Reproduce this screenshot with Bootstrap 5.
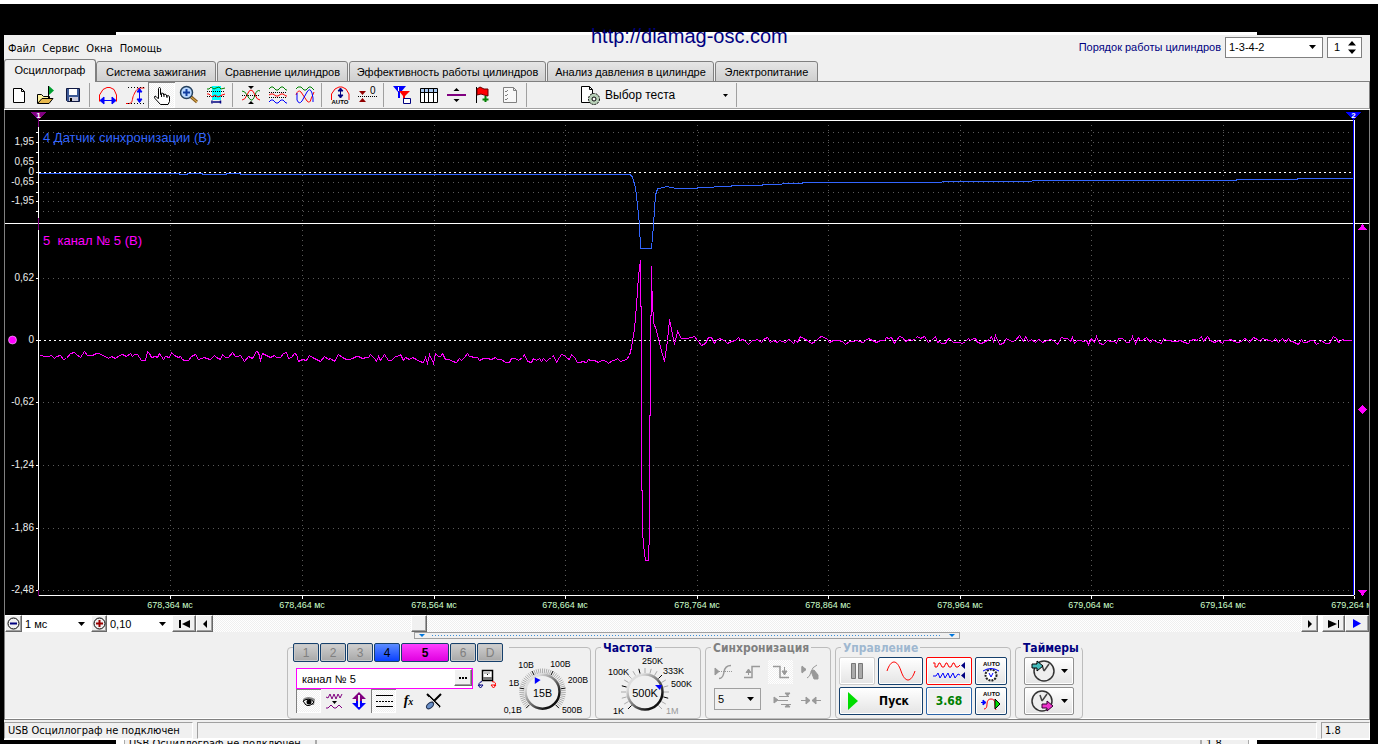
<!DOCTYPE html>
<html lang="ru">
<head>
<meta charset="utf-8">
<meta name="viewport" content="width=device-width, initial-scale=1">
<title>Осциллограф</title>
<link href="https://cdn.jsdelivr.net/npm/bootstrap@5.3.0/dist/css/bootstrap.min.css" rel="stylesheet">
<style>
:root{--face:#f0f0f0;--line:#808080;--navy:#000080;--mag:#f0f;--ui:"Liberation Sans",Arial,sans-serif;--tah:"DejaVu Sans Condensed","Liberation Sans",sans-serif}
body{background:#fff;color:#000;font:11px/14px var(--ui)}
button,input,select{font:inherit;color:inherit;border-radius:0;margin:0}
button{padding:0;border:0;background:none}
svg{display:block}
.desk{background:#000;margin:4px 4px 0 0;min-height:calc(100vh - 4px);padding-top:28px;overflow:hidden}
.backwin{margin:0 121px 0 116px;background:#fff;height:3px}
.backwin.foot{height:4px;overflow:hidden;font-family:var(--tah)}
.backwin.foot span{background:var(--face);border:1px solid #aaa;border-width:0 1px;height:4px;padding-left:4px;line-height:8px}
.site{top:26px;left:50%;margin-left:-100px;font-size:20px;line-height:20px;color:var(--navy);text-decoration:none;z-index:3}
.app{margin:0 8px 0 4px;background:var(--face)}
.menubar{height:24px;font-family:var(--tah)}
.menubar a{color:#000;text-decoration:none;margin-right:7px}
.order{color:var(--navy);font-family:var(--ui)}
.drop{appearance:none;border:1px solid var(--line);padding:0 3px;background:#fff url("data:image/svg+xml,%3Csvg xmlns='http://www.w3.org/2000/svg' width='7' height='4'%3E%3Cpath d='M0 0h7L3.5 4z'/%3E%3C/svg%3E") no-repeat right 6px center}
.spin{border:1px solid var(--line);background:#fff;width:35px;height:21px}
.spin input{appearance:textfield;width:20px;border:0;padding:0 0 0 6px;background:none}
.spin input::-webkit-inner-spin-button{display:none}
.tabstrip{height:23px;box-shadow:inset 0 -1px var(--line)}
.tabstrip button{height:21px;width:120px;margin-right:1px;border:1px solid var(--line);border-radius:3px 3px 0 0;background:linear-gradient(#e6e6e6,#cfcfcf);white-space:nowrap}
.tabstrip button.active{height:23px;width:92px;margin:0;background:var(--face);border-bottom:0;padding-bottom:2px}
.tabstrip button:nth-child(3){width:131px}
.tabstrip button:nth-child(4){width:197px}
.tabstrip button:nth-child(5){width:167px}
.tabstrip button:nth-child(6){width:103px}
.tools{height:27px;border:solid var(--line);border-width:0 1px 1px;border-bottom-color:#a0a0a0;box-shadow:0 1px #fff;margin-bottom:1px}
.tools .tb{width:27px;height:26px;display:grid;place-items:center}
.down{background:repeating-conic-gradient(#fff 0 25%,#f0f0f0 0 50%) 0 0/2px 2px;box-shadow:inset 1px 1px var(--line),inset -1px -1px #fff}
.vr1{width:1px;height:24px;background:#a0a0a0;margin:0 4px 0 3px}
.testsel{font-size:12px;width:149px}
.scope{background:#000;border:solid var(--line);border-width:0 1px}
.scope svg{width:100%;height:auto;font-family:var(--ui)}
.navrow{height:17px;border:solid var(--line);border-width:0 1px;background:#fff}
.rb{height:17px;background:var(--face);border:1px solid;border-color:#fff #696969 #696969 #fff;box-shadow:inset -1px -1px #a0a0a0;display:grid;place-items:center;flex:none}
.navrow .drop{border:0;height:17px}
.scroll{appearance:none;height:17px;background:repeating-conic-gradient(#fff 0 25%,#efefef 0 50%) 0 0/2px 2px}
.scroll::-webkit-slider-thumb{appearance:none;width:16px;height:17px;background:var(--face);border:1px solid;border-color:#fff #696969 #696969 #fff;box-shadow:inset -1px -1px #a0a0a0}
.panel{border:solid var(--line);border-width:0 1px 1px;height:88px;box-shadow:inset 0 -1px #fff}
.grip{width:546px;height:7px;border:1px solid #a0a0a0;margin:0 auto}
.grip i{flex:1;margin:2px 7px;height:1px;background:repeating-linear-gradient(90deg,#3b8fd8 0 1px,transparent 0 3px)}
.group{border:1px solid #bcbcbc;border-radius:4px;height:72px;position:relative;margin-right:4px}
.group legend{position:absolute;top:-7px;left:5px;width:auto;float:none;margin:0;padding:0 2px;background:var(--face);font:bold 12px/14px "DejaVu Sans Condensed",sans-serif;color:var(--navy)}
.chs{position:absolute;top:-5px;left:5px;background:var(--face);padding-right:6px;gap:1px}
.chs button{width:26px;height:19px;border:1px solid #16406c;border-radius:2px;background:linear-gradient(#d0d0d0,#a8a8a8);color:#808080;font-size:12px;line-height:16px;box-shadow:inset 0 0 0 1px #c8c8c8}
.chs .c4{background:linear-gradient(#5c8cff,#0a40ff);box-shadow:none;color:#000}
.chs .c5{background:linear-gradient(#ff40ff,#e000e0);box-shadow:none;width:48px;color:#000;font-weight:bold}
.chname{width:177px;height:21px;border:1px solid var(--mag);background:#fff}
.chname input{border:0;width:150px;padding:0 5px;background:none}
.mini{width:25px;height:24px;display:grid;place-items:center}
.cbtn{border:1px solid #16406c;border-radius:2px;background:linear-gradient(#fff,#e4e4e4);display:grid;place-items:center;box-shadow:inset 0 0 0 1px #fff}
.ctl{display:grid;grid-template-columns:36px 45px 46px 32px;grid-auto-rows:28px;gap:2px 3px;padding:9px 3px}
.timer{width:50px;height:28px;border-color:#909090;display:flex;align-items:center;justify-content:center;gap:5px}
.status{height:20px;padding-top:2px;border-bottom:1px solid #fff;font-family:var(--tah)}
.status div{border:1px solid;border-color:#a0a0a0 #fff #fff #a0a0a0;padding:1px 0 0 3px;height:17px}
</style>
</head>
<body>
<a class="site position-absolute" href="http://diamag-osc.com">http://diamag-osc.com</a>
<div class="desk d-flex flex-column">
<div class="backwin"></div>
<main class="app d-flex flex-column">
<header class="menubar d-flex align-items-center">
<nav class="d-flex ps-1 pt-1"><a href="#">Файл</a><a href="#">Сервис</a><a href="#">Окна</a><a href="#">Помощь</a></nav>
<div class="order ms-auto d-flex align-items-center me-2">
<label for="ord">Порядок работы цилиндров</label>
<select id="ord" class="drop text-black ms-1" style="width:98px;height:21px"><option>1-3-4-2</option></select>
<div class="spin d-flex align-items-center text-black ms-1"><input type="number" value="1" aria-label="Цилиндр">
<svg width="8" height="13"><path d="M0 4.500L4 0l4 4.500zM0 8.500h8L4 13z"/></svg></div>
</div>
</header>
<div class="tabstrip d-flex align-items-end" role="tablist">
<button class="active" role="tab">Осциллограф</button><button role="tab">Система зажигания</button><button role="tab">Сравнение цилиндров</button><button role="tab">Эффективность работы цилиндров</button><button role="tab">Анализ давления в цилиндре</button><button role="tab">Электропитание</button>
</div>
<div class="tools d-flex align-items-center" role="toolbar">
<button class="tb" aria-label="Новый"><svg width="20" height="20" fill="#fff" stroke="#000"><path d="M4.500 3.500h8l3 3v11h-11zM12.500 3.500v3h3"/></svg></button>
<button class="tb" aria-label="Открыть"><svg width="20" height="20"><path d="M1.500 18V9.500h4l2 2h6v2" fill="#fff3a0" stroke="#000"/><path d="M1.500 18.500L6 13.500h11l-4 5z" fill="#e8b84c" stroke="#000"/><path d="M12.500 1v13" stroke="#000"/><path d="M13 1l5 4.500-5 4.500z" fill="#00a030"/></svg></button>
<button class="tb" aria-label="Сохранить"><svg width="20" height="20"><path d="M3.500 3.500h13v13h-12l-1-1z" fill="#3d5a96" stroke="#101840"/><path d="M6 4h8v6H6z" fill="#fff"/><path d="M6 12h9v4H6z" fill="#ccd"/><path d="M7 13h2v3H7z" fill="#000"/></svg></button>
<span class="vr1"></span>
<button class="tb" aria-label="Ширина"><svg width="20" height="20" fill="none"><path d="M1.500 16.500V10L5 4.500l4-2h3l4 2L18.500 10v6.500" stroke="red"/><path d="M3 15.500h14M6 12l-4 3.500L6 19zM14 12l4 3.500-4 3.500z" stroke="#00f" fill="#00f"/></svg></button>
<button class="tb" aria-label="Высота"><svg width="20" height="20" fill="none"><path d="M1 18.500h3c4 0 3-5 4.500-8s3-7.500 7-7.500h4" stroke="red"/><path d="M3 2.500h16M3 18.500h16" stroke="#000" stroke-dasharray="1 2"/><path d="M14.500 5v11M12 7l2.500-3.500L17 7zM12 14l2.500 3.500L17 14z" stroke="#00f" fill="#00f"/></svg></button>
<button class="tb down" aria-label="Рука"><svg width="20" height="20" fill="#fff" stroke="#000"><path d="M6.500 13.500V3.500Q7.500 1 8.500 3.500v6l1-1.500 2 .5V10l1.500-1 1.500 1v1.500L16 10.500l1.500 1v5l-1.500 3H8.500L3 13.500q-1-1.500 0-2.500 1 0 3.500 3M9.500 9v3M12 10v2M15 11v2"/></svg></button>
<button class="tb" aria-label="Лупа"><svg width="20" height="20"><path d="M11 11l7 6" stroke="#8a5a20" stroke-width="3"/><path d="M12 12l6 5" stroke="#e8c050"/><circle cx="7.500" cy="7.500" r="6" fill="#b8d8ff" stroke="#24405c" stroke-width="1.500"/><path d="M7.500 4v7M4 7.500h7" stroke="#123ea0" stroke-width="2"/></svg></button>
<button class="tb" aria-label="Окно"><svg width="20" height="20" fill="none"><path d="M6 1h9v14H6z" fill="#0ff"/><path d="M1 4h2l2-2 3 2 2-1 3-1 2 2 4-1" stroke="green"/><path d="M1 6.500h18M1 11.500h18" stroke="#000" stroke-dasharray="1 1"/><path d="M1 9h2l3 3 3-2 3 2 4-2 3-1" stroke="red"/><path d="M6 15.500v3M14.500 15.500v3M7 17h7" stroke="#000080" stroke-width="1.500"/></svg></button>
<span class="vr1"></span>
<button class="tb" aria-label="Центр"><svg width="20" height="20" fill="none"><path d="M1 6q3 0 5 4t4 5 4-5 5-4" stroke="green"/><path d="M1 15q3 0 5-5t4-5 4 5 5 5" stroke="red"/><path d="M1 10.500h18" stroke="#000" stroke-dasharray="1 1"/><path d="M7 1h6l-3 3zM7 19h6l-3-3z" fill="#000"/></svg></button>
<button class="tb" aria-label="Разделить"><svg width="20" height="20" fill="none"><path d="M1 4l2-2h2l3 3h2l3-3h2l3 3h1" stroke="green"/><path d="M1 7.500h18M1 12.500h18" stroke="#000" stroke-dasharray="1 1"/><path d="M1 10l2-1h2l3 2h2l3-2h2l3 2h1" stroke="red"/><path d="M1 17l2-2h2l3 3h2l3-3h2l3 3h1" stroke="#00f"/></svg></button>
<button class="tb" aria-label="Наложить"><svg width="20" height="20" fill="none"><path d="M1 4l2-2h3l3 3h2l3-3h2l3 3" stroke="green"/><path d="M1 10q2-6 5-3l6 9q3 3 4-2l3-7" stroke="red"/><path d="M2 8v7q2 5 5 1l5-9q3-5 5 1l1 5v4" stroke="#00f"/></svg></button>
<span class="vr1"></span>
<button class="tb" aria-label="Авто"><svg width="20" height="20" fill="none"><path d="M1.500 15V9L5 4l4-2h3l4 2 3 5v6" stroke="red"/><path d="M10.500 4v8M8 6l2.500-3L13 6zM8 10l2.500 3L13 10z" stroke="#000080" fill="#000080"/><text x="1.500" y="19" font-size="6" font-weight="bold" fill="#000">AUTO</text></svg></button>
<button class="tb" aria-label="Ноль"><svg width="20" height="20"><path d="M2 6h7l-3.500 4zM2 17h7l-3.500-4z" fill="#900000"/><path d="M1 11.500h19" stroke="#000" stroke-dasharray="1 1"/><text x="13" y="9" font-size="10">0</text></svg></button>
<span class="vr1"></span>
<button class="tb" aria-label="Маркеры"><svg width="20" height="20"><path d="M1 1h13L9 7H8v6H6V7z" fill="#00f"/><path d="M7 6h11l-5 5v5h-2v-5z" fill="red"/><path d="M6.500 2v4" stroke="#fff"/><path d="M11.500 13.500h7v5h-7z" fill="#fff" stroke="#000080"/></svg></button>
<button class="tb" aria-label="Таблица"><svg width="20" height="20"><path d="M1.500 3.500h17v14h-17z" fill="#fff" stroke="#000"/><path d="M2 4h16v3H2z" fill="#a8c8f0"/><path d="M1 7.500h18M5.500 4v14M9.500 4v14M14.500 4v14" stroke="#000"/></svg></button>
<button class="tb" aria-label="Линия"><svg width="20" height="20"><path d="M1 9h19v2H1z" fill="purple"/><path d="M7.500 6h6l-3-3zM7.500 14h6l-3 3z"/></svg></button>
<button class="tb" aria-label="Флаг"><svg width="20" height="20"><path d="M3.500 2v16" stroke="#000"/><path d="M4 4l3-2 4 2h4v7l-4-1-3-1-4 1z" fill="red" stroke="#600"/><path d="M12.500 11v6M9.500 14.500h6" stroke="green" stroke-width="2"/></svg></button>
<button class="tb" aria-label="Отчёт"><svg width="20" height="20" fill="#f8f8f8" stroke="#808080"><path d="M3.500 2.500h10l3 3v12h-13zM13.500 2.500v3h3M5 6l1 1 2-2M5 10l1 1 2-2M5 14l1 1 2-2"/></svg></button>
<span class="vr1"></span>
<button class="testsel d-flex align-items-center ms-5"><svg width="22" height="22"><path d="M2.500 2.500h8l3 3v13h-11zM10.500 2.500v3h3" fill="#fff" stroke="#000"/><circle cx="15" cy="15" r="5.500" fill="#b8d0b8" stroke="#000" stroke-dasharray="2 1"/><circle cx="15" cy="15" r="2" fill="#fff" stroke="#000"/></svg><span class="ps-1">Выбор теста</span><svg class="ms-auto" width="5" height="3"><path d="M0 0h5L2.500 3z"/></svg></button><span class="vr1 ms-2"></span>
</div>
<div class="scope">
<svg id="plot" viewBox="5 110 1364 505" shape-rendering="crispEdges">
<g id="grid" stroke="#5a5a5a" stroke-dasharray="1 4"></g>
<g stroke="#fff" fill="none">
<path d="M39 172.500H1354M39 340.500H1354" stroke-dasharray="2 3"/>
<path d="M38.500 120.500H1354.500M38.500 120.500V595.500H1354M5 223.500H1369M1354.500 120V595"/>
<path d="M36 132.500h3m-3 10h3m-3 10h3m-3 10h3m-3 10h3m-3 10h3m-3 10h3m-3 9h3m-3 10h3M36 278.500h3m-3 62h3m-3 62h3m-3 63h3m-3 63h3m-3 62h3"/>
</g>
<path d="M38.500 115v12M38.500 218v12M38.500 590v6" stroke="purple"/>
<path d="M1353.500 115V595" stroke="#00f"/>
<path d="M31 112h15l-7.500 8z" fill="purple"/><path d="M1346 112h15l-7.500 8z" fill="#00f"/>
<g fill="#fff" font-size="8" font-weight="bold" text-anchor="middle"><text x="38.500" y="118">1</text><text x="1353.500" y="118">2</text></g>
<g id="vlab" fill="#eee" font-size="10" text-anchor="end"></g>
<g id="tlab" fill="#cfc" font-size="9" text-anchor="middle"></g>
<text x="43" y="142" font-size="13" fill="#36f">4 Датчик синхронизации (В)</text>
<text x="43" y="245" font-size="13" fill="#f0f" xml:space="preserve">5  канал № 5 (В)</text>
<path fill="none" stroke="#36f" d="M39 173.500H179V174.500H187V173.500H202V174.500H226V173.500H240V174.500H630L632.500 177L635.500 188L637.500 205L639.500 225L640.500 248.500H651.500L653.500 225L655.500 195L657.500 189L667 186.500L676 188.500H697V187.500L731 186.500V185.500H762V184.500L802 183.500V182.500H900L985 181.500L1080 180.500H1236V179.500H1297V178.500H1353"/>
<path id="wave" fill="none" stroke="#f0f" transform="translate(.5 .5)"/>
<circle cx="12.500" cy="340" r="4" fill="#f0f" stroke="#fcf" stroke-width=".6" shape-rendering="auto"/>
<path d="M1358 230h9l-4.500-6zM1358 590h9l-4.500 6zM1358 409.500l4.500-4.500 4.500 4.500-4.500 4.500z" fill="#f0f"/>
</svg>
</div>
<div class="navrow d-flex">
<button class="rb" style="width:17px" aria-label="Меньше"><svg width="13" height="13"><circle cx="6.500" cy="6.500" r="5.500" fill="none" stroke="#000"/><path d="M3 6.500h7" stroke="#000080" stroke-width="2"/></svg></button>
<select class="drop" style="width:69px" aria-label="Развёртка"><option>1 мс</option></select>
<button class="rb" style="width:16px" aria-label="Больше"><svg width="13" height="13"><circle cx="6.500" cy="6.500" r="5.500" fill="none" stroke="#000"/><path d="M3 6.500h7M6.500 3v7" stroke="#900" stroke-width="2"/></svg></button>
<select class="drop" style="width:65px" aria-label="Масштаб"><option>0,10</option></select>
<button class="rb" style="width:24px" aria-label="В начало"><svg width="11" height="8"><path d="M0 0h2v8H0zM11 0v8L3 4z"/></svg></button>
<button class="rb" style="width:17px" aria-label="Назад"><svg width="4" height="8"><path d="M4 0v8L0 4z"/></svg></button>
<input class="scroll flex-grow-1" type="range" min="0" max="1000" value="185" aria-label="Прокрутка">
<button class="rb" style="width:17px" aria-label="Вперёд"><svg width="4" height="8"><path d="M0 0v8l4-4z"/></svg></button>
<button class="rb ms-1" style="width:23px" aria-label="В конец"><svg width="11" height="8"><path d="M10 0h1v8h-1zM0 0v8l9-4z"/></svg></button>
<button class="rb" style="width:24px" aria-label="Пуск просмотра"><svg width="8" height="9"><path d="M0 0v9l8-4.500z" fill="#00f"/></svg></button>
</div>
<div class="panel">
<div class="grip d-flex align-items-center px-1"><svg width="6" height="4"><path d="M0 0h6L3 3z" fill="#07d"/></svg><i></i><svg width="6" height="4"><path d="M0 0h6L3 3z" fill="#07d"/></svg></div>
<div class="d-flex justify-content-center pt-2 pe-1">
<fieldset class="group d-flex" style="width:304px">
<div class="chs d-flex"><button>1</button><button>2</button><button>3</button><button class="c4">4</button><button class="c5">5</button><button>6</button><button>D</button></div>
<div class="ps-2 pt-3">
<div class="d-flex align-items-center mt-1">
<div class="chname d-flex"><input value="канал № 5" aria-label="Имя канала"><button class="rb ms-auto mt-px" style="width:18px" aria-label="Выбрать"><svg width="8" height="2"><path d="M0 0h2v2H0zM3 0h2v2H3zM6 0h2v2H6z"/></svg></button></div>
<svg class="ms-1" width="20" height="20" fill="none"><path d="M5.500 1.500h10v10h-10z" fill="#fff" stroke="#000" stroke-width="1.500"/><path d="M6 8h9v3H6z" fill="#777"/><path d="M7.500 4h6M10.500 5v2" stroke="#000" stroke-dasharray="1 1"/><path d="M5 12.500Q0 14 3.500 17M1 16h5l-2.500 3z" stroke="#000080" fill="#000080" fill-opacity="0"/><path d="M15 12.500q6 1 2 4.500M19 16h-5l2.500 3z" stroke="red"/></svg>
</div>
<div class="d-flex">
<button class="mini down" aria-label="Видимость"><svg width="18" height="16"><path d="M3 6q5-4 12 0l-1 6H5z" fill="#888"/><path d="M3 8q6-4 11 1-4 5-8 3z" stroke="#000" fill="#eee"/><circle cx="9" cy="9" r="2.500"/></svg></button>
<button class="mini" aria-label="Фильтр"><svg width="18" height="18" fill="none" stroke="purple"><path d="M1 5l2 1 2-4 2 5 2-5 2 5 2-5 2 4 2-4M1 16h2l3-3 3 3h2l3-3 3 3"/><path d="M7 9h5l-2.500 3z" fill="#000" stroke="none"/></svg></button>
<button class="mini" aria-label="Сдвиг"><svg width="16" height="20"><path d="M8 1l7 7h-4v3H9V4H7v7H5V8H1z" fill="purple"/><path d="M8 19l7-7h-4v-2H9v6H7v-6H5v2H1z" fill="#00f"/></svg></button>
<button class="mini down" aria-label="Линии"><svg width="18" height="16" stroke="#000"><path d="M1 2.500h17M1 13.500h17"/><path d="M1 8.500h17" stroke-dasharray="2 1"/></svg></button>
<button class="mini" aria-label="Формула"><i style="font:italic bold 14px/14px 'Liberation Serif',serif">f<small style="font-size:10px">x</small></i></button>
<button class="mini" aria-label="Настройки"><svg width="18" height="18"><path d="M2 2l13 13M16 2L8 10" stroke="#000" stroke-width="2"/><path d="M4 5l10 10" stroke="#ddd"/><ellipse cx="5" cy="13.500" rx="4" ry="2.500" transform="rotate(-40 5 13.500)" fill="#6a90c8" stroke="#235"/></svg></button>
</div>
</div>
<svg class="dial ms-auto" width="96" height="70" viewBox="494 648 96 70" data-c="541 692"></svg>
</fieldset>
<fieldset class="group" style="width:106px"><legend>Частота</legend>
<svg class="dial" width="100" height="70" viewBox="596 648 100 70" data-c="645 692"></svg>
</fieldset>
<fieldset class="group ps-1" style="width:126px"><legend style="color:#808080">Синхронизация</legend>
<div class="d-flex pt-2 mt-1"><button class="mini" aria-label="Триггер"><svg width="18" height="16" fill="none" stroke="#999"><path d="M1 4v7l4-3.500z" fill="#999"/><path d="M1 7.500h17" stroke-dasharray="1 1"/><path d="M5 14.500q4 0 5-6.500t7-6.500" stroke-width="1.500"/></svg></button><button class="mini ms-1" aria-label="Фронт"><svg width="18" height="16" fill="none" stroke="#999"><path d="M1 13.500h8v-11h8" stroke-width="1.500"/><path d="M5.500 6v5M3 8.500h5L5.500 5z" fill="#999"/></svg></button><button class="mini down shadow-none ms-1" aria-label="Спад"><svg width="18" height="16" fill="none" stroke="#999"><path d="M1 2.500h7v11h9" stroke-width="1.500"/><path d="M12.500 3v7M10 7h5l-2.500 4z" fill="#999"/></svg></button><button class="mini ms-1" aria-label="Режим"><svg width="18" height="18" fill="#999" stroke="#999"><path d="M1 3v7l4-3.500zM6 15q3-1 4-6t6-7" fill-opacity="0"/><path d="M1 4v5l4-2.500zM10 8l3-1 4 5v4h-4z"/></svg></button></div>
<div class="d-flex mt-1"><select class="drop ms-1" style="width:47px;height:22px;background-color:#f0f0f0;border-color:#a0a0a0" aria-label="Канал"><option>5</option></select><button class="mini ms-2 me-1" aria-label="Уровень"><svg width="18" height="16" fill="#999" stroke="#999"><path d="M1 5v6l4-3zM12 1h5l-2.500 3zM12 15h5l-2.500-3z"/><path d="M5 8.500h10M6 4.500h10M8 12.500h10"/></svg></button><button class="mini" aria-label="Сжать"><svg width="20" height="10" fill="#999" stroke="#999"><path d="M0 5.500h9M5 2v7l4-3.500zM20 5.500h-9M15 2v7l-4-3.500z"/></svg></button></div>
</fieldset>
<fieldset class="group" style="width:176px"><legend style="color:#9fb8d0">Управление</legend>
<div class="ctl">
<button class="cbtn" style="border-color:#ccc" aria-label="Пауза"><svg width="12" height="17" fill="#aaa" stroke="#777"><path d="M.500.500h4v15h-4zM7.500.500h4v15h-4z"/></svg></button>
<button class="cbtn" aria-label="Синус"><svg width="30" height="20" fill="none" stroke="red"><path d="M1 10C5-2 11-2 15 10s10 12 14 0"/></svg></button>
<button class="cbtn" style="border-color:red" aria-label="Сигналы"><svg width="34" height="20" fill="none"><path d="M1 2h2v4h2l2-4h1l2 4h2l2-4h1l2 4h2l2-4h1l2 4h2l2-2" stroke="red"/><path d="M1 15h3l2-3 2 5 3-5 2 5 3-5 2 5 3-5 2 5 3-4 2 1" stroke="#00f"/><path d="M33 1v7l-4-3.500zM33 11v7l-4-3.500z" fill="#000080"/></svg></button>
<button class="cbtn" aria-label="Автонапряжение"><svg width="24" height="24" fill="none"><text x="4" y="7" font-size="6" font-weight="bold" fill="#000" stroke="none">AUTO</text><circle cx="12" cy="16" r="5.500" fill="#fff" stroke="#222" stroke-dasharray="2 1" stroke-width="2"/><path d="M4 12q8-5 16 0" stroke="#00f"/><path d="M10 14l2 4 2-4" stroke="#00f"/></svg></button>
<button class="cbtn" style="grid-column:span 2;grid-template-columns:26px 1fr"><svg width="10" height="18"><path d="M0 0l10 9-10 9z" fill="#0d0"/></svg><b style="font:bold 12px var(--tah)">Пуск</b></button>
<button class="cbtn" style="color:#008000;border-color:#2a64a8;background:#f0f0f0;font:bold 12px var(--tah)">3.68</button>
<button class="cbtn" aria-label="Автозапуск"><svg width="24" height="24" fill="none"><text x="4" y="7" font-size="6" font-weight="bold" fill="#000">AUTO</text><path d="M5 20q3 0 3-5t4-5 4 5 1 6" stroke="red"/><path d="M2 13.500h4M4 11l3 2.500L4 16z" stroke="#00f" fill="#00f"/><path d="M16 10l5 5-5 5z" fill="#0d0" stroke="#000"/></svg></button>
</div>
</fieldset>
<fieldset class="group m-0" style="width:68px"><legend>Таймеры</legend>
<div class="d-grid gap-1 pt-2 ps-2" style="margin-top:1px;row-gap:2px!important">
<button class="cbtn timer" aria-label="Таймер старта"><svg width="26" height="24"><circle cx="14" cy="12" r="10" fill="#eee" stroke="#333" stroke-width="1.500"/><path d="M14 12l5-7M14 12l-2-6" stroke="#444" stroke-width="1.500"/><path d="M2 5h5V2l6 5-6 5V9H2z" fill="#4bb" stroke="#000"/></svg><svg width="7" height="4"><path d="M0 0h7L3.500 4z"/></svg></button>
<button class="cbtn timer" aria-label="Таймер остановки"><svg width="26" height="24"><circle cx="12" cy="12" r="10" fill="#eee" stroke="#333" stroke-width="1.500"/><path d="M12 12l5-7M12 12l-2-6" stroke="#444" stroke-width="1.500"/><path d="M12 15h5v-3l6 5-6 5v-3h-5z" fill="#e3c" stroke="#303"/></svg><svg width="7" height="4"><path d="M0 0h7L3.500 4z"/></svg></button>
</div>
</fieldset>
</div>
</div>
<footer class="status d-flex"><div style="width:189px">USB Осциллограф не подключен</div><div class="flex-grow-1 ms-1 me-1"></div><div style="width:49px">1.8</div></footer>
</main>
<div class="backwin foot d-flex ps-2"><span style="width:192px">USB Осциллограф не подключен</span><span class="flex-grow-1"></span><span class="me-2" style="width:48px">1.8</span></div>
</div>
<script>
// Grid lines, axis captions and the channel 5 trace
const $=id=>document.getElementById(id);
const rows=[132,142,152,162,182,192,201,211,278,402,465,528,590],first=170;
let g='';
rows.forEach(y=>g+=`<path d="M43 ${y+.5}H1352"/>`);
let t='';
for(let i=0;i<10;i++){
  const x=Math.round(first+.4+i*131.55);
  if(i<9)g+=`<path d="M${x+.5} 125V594"/>`;
  g+=`<path d="M${x+.5} 596v3" stroke="#fff" stroke-dasharray="none"/>`;
  const v=364+i*100;
  t+=`<text x="${x}" y="608">${v>999?679:678},${String(v%1000).padStart(3,'0')} мс</text>`;
}
$('grid').innerHTML=g;$('tlab').innerHTML=t;
$('vlab').innerHTML=[[145,'1,95'],[165,'0,65'],[175,'0'],[185,'-0,65'],[204,'-1,95'],[281,'0,62'],[343,'0'],[405,'-0,62'],[468,'-1,24'],[531,'-1,86'],[593,'-2,48']].map(([y,s])=>`<text x="34" y="${y}">${s}</text>`).join('');
let seed=7;const rnd=()=>(seed=(seed*16807)%2147483647)/2147483647;
const noise=(a,b,base,amp)=>{const p=[];for(let x=a;x<b;x+=2+Math.floor(rnd()*3))p.push(x+' '+Math.round(base(x)+(rnd()+rnd()-1)*amp));return p};
const pts=[...noise(39,622,x=>355+(x-39)/150,6),'626 359','629 355','631 347','634 328','636 305','638 275','640 260','640 306','641 306','641 490','642 490','642 530','643 545','645 560','648 560','649 530','649 415','650 415','650 315','651 315','651 265','651 280','652 300','653 322','656 330','660 347','664 361','667 340','669 319','674 344','677 331','681 338','687 338','694 336','701 345',...noise(705,1353,()=>340,5)];
$('wave').setAttribute('d','M'+pts.join('L'));
// Rotary knobs with their scale captions
const caps=[[[516,668,'10В'],[549,666,'100В'],[506,686,'1В'],[567,683,'200В'],[501,714,'0,1В'],[561,714,'500В']],[[642,664,'250K'],[608,675,'100K'],[663,674,'333K'],[671,687,'500K'],[613,714,'1K'],[666,714,'1M']]];
document.querySelectorAll('.dial').forEach((s,k)=>{
  const [cx,cy]=s.dataset.c.split(' ').map(Number);let h='';
  const n=k?18:50;
  for(let i=0;i<=n;i++){const a=(135+270*i/n)*Math.PI/180,c=Math.cos(a),q=Math.sin(a);h+=`<path d="M${cx+19*c} ${cy+19*q}L${cx+24*c} ${cy+24*q}" stroke="${i%(k?4:10)?'#aaa':'#000'}"/>`}
  h+=`<defs><linearGradient id="k${k}" x2="1" y2="1"><stop offset=".2" stop-color="#ddd"/><stop offset=".8" stop-color="#111"/></linearGradient></defs><circle cx="${cx}" cy="${cy}" r="17.500" fill="#f0f0f0" stroke="url(#k${k})" stroke-width="2.500"/>`;
  h+=k?'<path d="M655 685h7l-2 5z" fill="#00f"/>':'<path d="M533 677v7l6-4z" fill="#00f"/>';
  h+=`<text x="${cx}" y="${cy+5}" font-size="11" text-anchor="middle">${k?'500K':'15В'}</text>`;
  caps[k].forEach(([x,y,c])=>h+=`<text x="${x}" y="${y}" font-size="9" fill="${c==='1M'?'#999':'#000'}">${c}</text>`);
  s.innerHTML=h;
});
</script>
<script src="https://cdn.jsdelivr.net/npm/bootstrap@5.3.0/dist/js/bootstrap.bundle.min.js"></script>
</body>
</html>
